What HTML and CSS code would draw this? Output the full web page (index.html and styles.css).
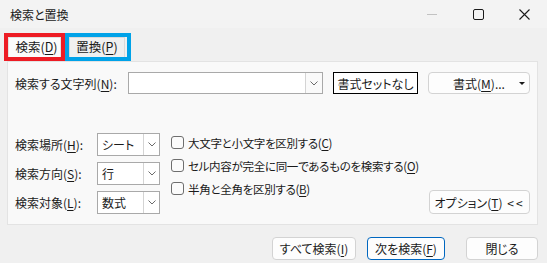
FILE: index.html
```html
<!DOCTYPE html>
<html lang="ja">
<head>
    <meta charset="UTF-8">
    <title>検索と置換</title>
    <link rel="stylesheet" href="styles.css">
</head>
<body>
    <div class="window">
        <div class="titlebar">
            <span class="title">検索と置換</span>
            <div class="controls">
                <span class="ctl">
                    <svg width="10" height="10" viewBox="0 0 10 10"><line x1="0" y1="5.5" x2="10" y2="5.5" stroke="#c2c2c2" stroke-width="1"/></svg>
                </span>
                <span class="ctl">
                    <svg width="11" height="11" viewBox="0 0 11 11"><rect x="0.5" y="0.5" width="10" height="10" rx="1.5" fill="none" stroke="#1a1a1a" stroke-width="1"/></svg>
                </span>
                <span class="ctl">
                    <svg width="11" height="11" viewBox="0 0 11 11"><path d="M0.5 0.5 L10.5 10.5 M10.5 0.5 L0.5 10.5" stroke="#1a1a1a" stroke-width="1.1"/></svg>
                </span>
            </div>
        </div>

        <div class="tabs">
            <div class="tab-mark mark-red"><div class="tab tab-active">検索(<u>D</u>)</div></div>
            <div class="tab-mark mark-blue"><div class="tab">置換(<u>P</u>)</div></div>
        </div>

        <div class="panel">
            <div class="row-find">
                <label class="lbl-find">検索する文字列(<u>N</u>):</label>
                <div class="combo">
                    <span class="combo-text"></span>
                    <span class="combo-btn">
                        <svg width="8" height="5" viewBox="0 0 8 5"><path d="M0.5 0.5 L4 4 L7.5 0.5" fill="none" stroke="#6b6b6b" stroke-width="1"/></svg>
                    </span>
                </div>
                <button class="btn-plain">書式セットなし</button>
                <button class="btn btn-format"><span class="fmt-text">書式(<u>M</u>)...</span><span class="caret"></span></button>
            </div>

            <div class="row-options">
                <div class="selects">
                    <div class="sel-row">
                        <label class="lbl-sel">検索場所(<u>H</u>):</label>
                        <div class="select">
                            <span class="sel-text">シート</span>
                            <span class="sel-btn"><svg width="8" height="5" viewBox="0 0 8 5"><path d="M0.5 0.5 L4 4 L7.5 0.5" fill="none" stroke="#6b6b6b" stroke-width="1"/></svg></span>
                        </div>
                    </div>
                    <div class="sel-row">
                        <label class="lbl-sel">検索方向(<u>S</u>):</label>
                        <div class="select">
                            <span class="sel-text">行</span>
                            <span class="sel-btn"><svg width="8" height="5" viewBox="0 0 8 5"><path d="M0.5 0.5 L4 4 L7.5 0.5" fill="none" stroke="#6b6b6b" stroke-width="1"/></svg></span>
                        </div>
                    </div>
                    <div class="sel-row">
                        <label class="lbl-sel">検索対象(<u>L</u>):</label>
                        <div class="select">
                            <span class="sel-text">数式</span>
                            <span class="sel-btn"><svg width="8" height="5" viewBox="0 0 8 5"><path d="M0.5 0.5 L4 4 L7.5 0.5" fill="none" stroke="#6b6b6b" stroke-width="1"/></svg></span>
                        </div>
                    </div>
                </div>

                <div class="checks">
                    <div class="check-row"><span class="box"></span>大文字と小文字を区別する(<u>C</u>)</div>
                    <div class="check-row"><span class="box"></span>セル内容が完全に同一であるものを検索する(<u>O</u>)</div>
                    <div class="check-row"><span class="box"></span>半角と全角を区別する(<u>B</u>)</div>
                </div>

                <button class="btn btn-opt">オプション(<u>T</u>) <span class="arrows">&lt;&lt;</span></button>
            </div>
        </div>

        <div class="footer">
            <button class="btn btn-all">すべて検索(<u>I</u>)</button>
            <button class="btn btn-next">次を検索(<u>F</u>)</button>
            <button class="btn btn-close">閉じる</button>
        </div>
    </div>
</body>
</html>
```

FILE: styles.css
```css
body {
    margin: 0;
    background-color: #f0f0f0;
    font-family: "Noto Sans CJK JP", "Noto Sans", sans-serif;
    font-size: 12px;
    font-feature-settings: "palt";
    color: #1a1a1a;
}
u {
    text-decoration-thickness: 1px;
    text-underline-offset: 2px;
}
.window {
    width: 547px;
    height: 263px;
    overflow: hidden;
}
.titlebar {
    height: 28px;
    display: flex;
    align-items: center;
    background-color: #f3f3f3;
}
.title {
    margin-left: 10px;
    font-size: 12px;
    flex: 1;
}
.controls {
    display: flex;
    height: 28px;
}
.ctl {
    width: 46px;
    display: flex;
    align-items: center;
    justify-content: center;
}

/* tabs with the coloured marks around them */
.tabs {
    display: flex;
    margin-top: 5px;
    margin-left: 4px;
    height: 28px;
}
.tab-mark {
    border: 4px solid;
    box-sizing: border-box;
    height: 28px;
}
.mark-red {
    border-color: #ed1c24;
    width: 61px;
}
.mark-blue {
    border-color: #00a2e8;
    width: 66px;
}
.tab {
    height: 100%;
    box-sizing: border-box;
    display: flex;
    align-items: center;
    justify-content: center;
    background-color: #f0f0f0;
    border: 1px solid #dadada;
    border-bottom: none;
    margin-right: 2px;
    line-height: 1;
    font-size: 12.5px;
}
.tab-active {
    background-color: #fbfbfb;
    border-color: #e2e2e2;
    margin-right: 0;
    padding-left: 4px;
}

.panel {
    margin: 0 9px 0 7px;
    height: 164px;
    box-sizing: border-box;
    background-color: #f9f9f9;
    border: 1px solid #e3e3e3;
    padding: 10px 7px 0 7px;
}
.row-find {
    display: flex;
    align-items: center;
    height: 22px;
}
.lbl-find {
    width: 113px;
}
.combo {
    width: 195px;
    height: 22px;
    box-sizing: border-box;
    border: 1px solid #a9a9a9;
    background-color: #fff;
    display: flex;
}
.combo-text {
    flex: 1;
}
.combo-btn {
    width: 16px;
    border-left: 1px solid #d4d4d4;
    background-color: #fafafa;
    display: flex;
    align-items: center;
    justify-content: center;
}
button {
    font-family: inherit;
    font-size: 12px;
    font-feature-settings: "palt";
    color: #1a1a1a;
    padding: 0;
    cursor: pointer;
}
.btn-plain {
    margin-left: 10px;
    width: 85px;
    height: 22px;
    background-color: #fff;
    border: 1px solid #000;
}
.btn {
    background-color: #fdfdfd;
    border: 1px solid #d3d3d3;
    border-radius: 4px;
    height: 23px;
    box-sizing: border-box;
}
.btn-format {
    margin-left: 10px;
    width: 102px;
    height: 22px;
    display: flex;
    align-items: center;
}
.fmt-text {
    flex: 1;
    padding-left: 10px;
    text-align: center;
}
.caret {
    width: 0;
    height: 0;
    border-left: 3px solid transparent;
    border-right: 3px solid transparent;
    border-top: 3px solid #1a1a1a;
    margin-right: 4px;
}

.row-options {
    display: flex;
    margin-top: 37px;
}
.selects {
    display: flex;
    flex-direction: column;
    gap: 6px;
    padding-top: 2px;
    flex: none;
}
.sel-row {
    display: flex;
    align-items: center;
    height: 23px;
}
.lbl-sel {
    width: 82px;
}
.select {
    width: 63px;
    height: 23px;
    box-sizing: border-box;
    border: 1px solid #a9a9a9;
    background-color: #fff;
    display: flex;
}
.sel-text {
    flex: 1;
    padding-left: 4px;
    line-height: 21px;
}
.sel-btn {
    width: 15px;
    border-left: 1px solid #d4d4d4;
    display: flex;
    align-items: center;
    justify-content: center;
}
.checks {
    margin-left: 11px;
    display: flex;
    flex-direction: column;
    flex: none;
    font-size: 11.5px;
    letter-spacing: -0.3px;
}
.check-row {
    height: 23px;
    display: flex;
    align-items: center;
    white-space: nowrap;
}
.box {
    width: 13px;
    height: 13px;
    box-sizing: border-box;
    border: 1px solid #6e6e6e;
    border-radius: 3px;
    background-color: #fbfbfb;
    margin-right: 4px;
}
.btn-opt {
    margin-left: auto;
    align-self: flex-end;
    flex: none;
    width: 101px;
    height: 24px;
}
.arrows {
    letter-spacing: 2px;
    margin-left: 2px;
}

.footer {
    display: flex;
    justify-content: flex-end;
    margin-top: 12px;
    padding-right: 9px;
}
.btn-all {
    width: 84px;
}
.btn-next {
    width: 78px;
    margin-left: 11px;
    border-color: #0067c0;
}
.btn-close {
    width: 72px;
    margin-left: 21px;
}
```
